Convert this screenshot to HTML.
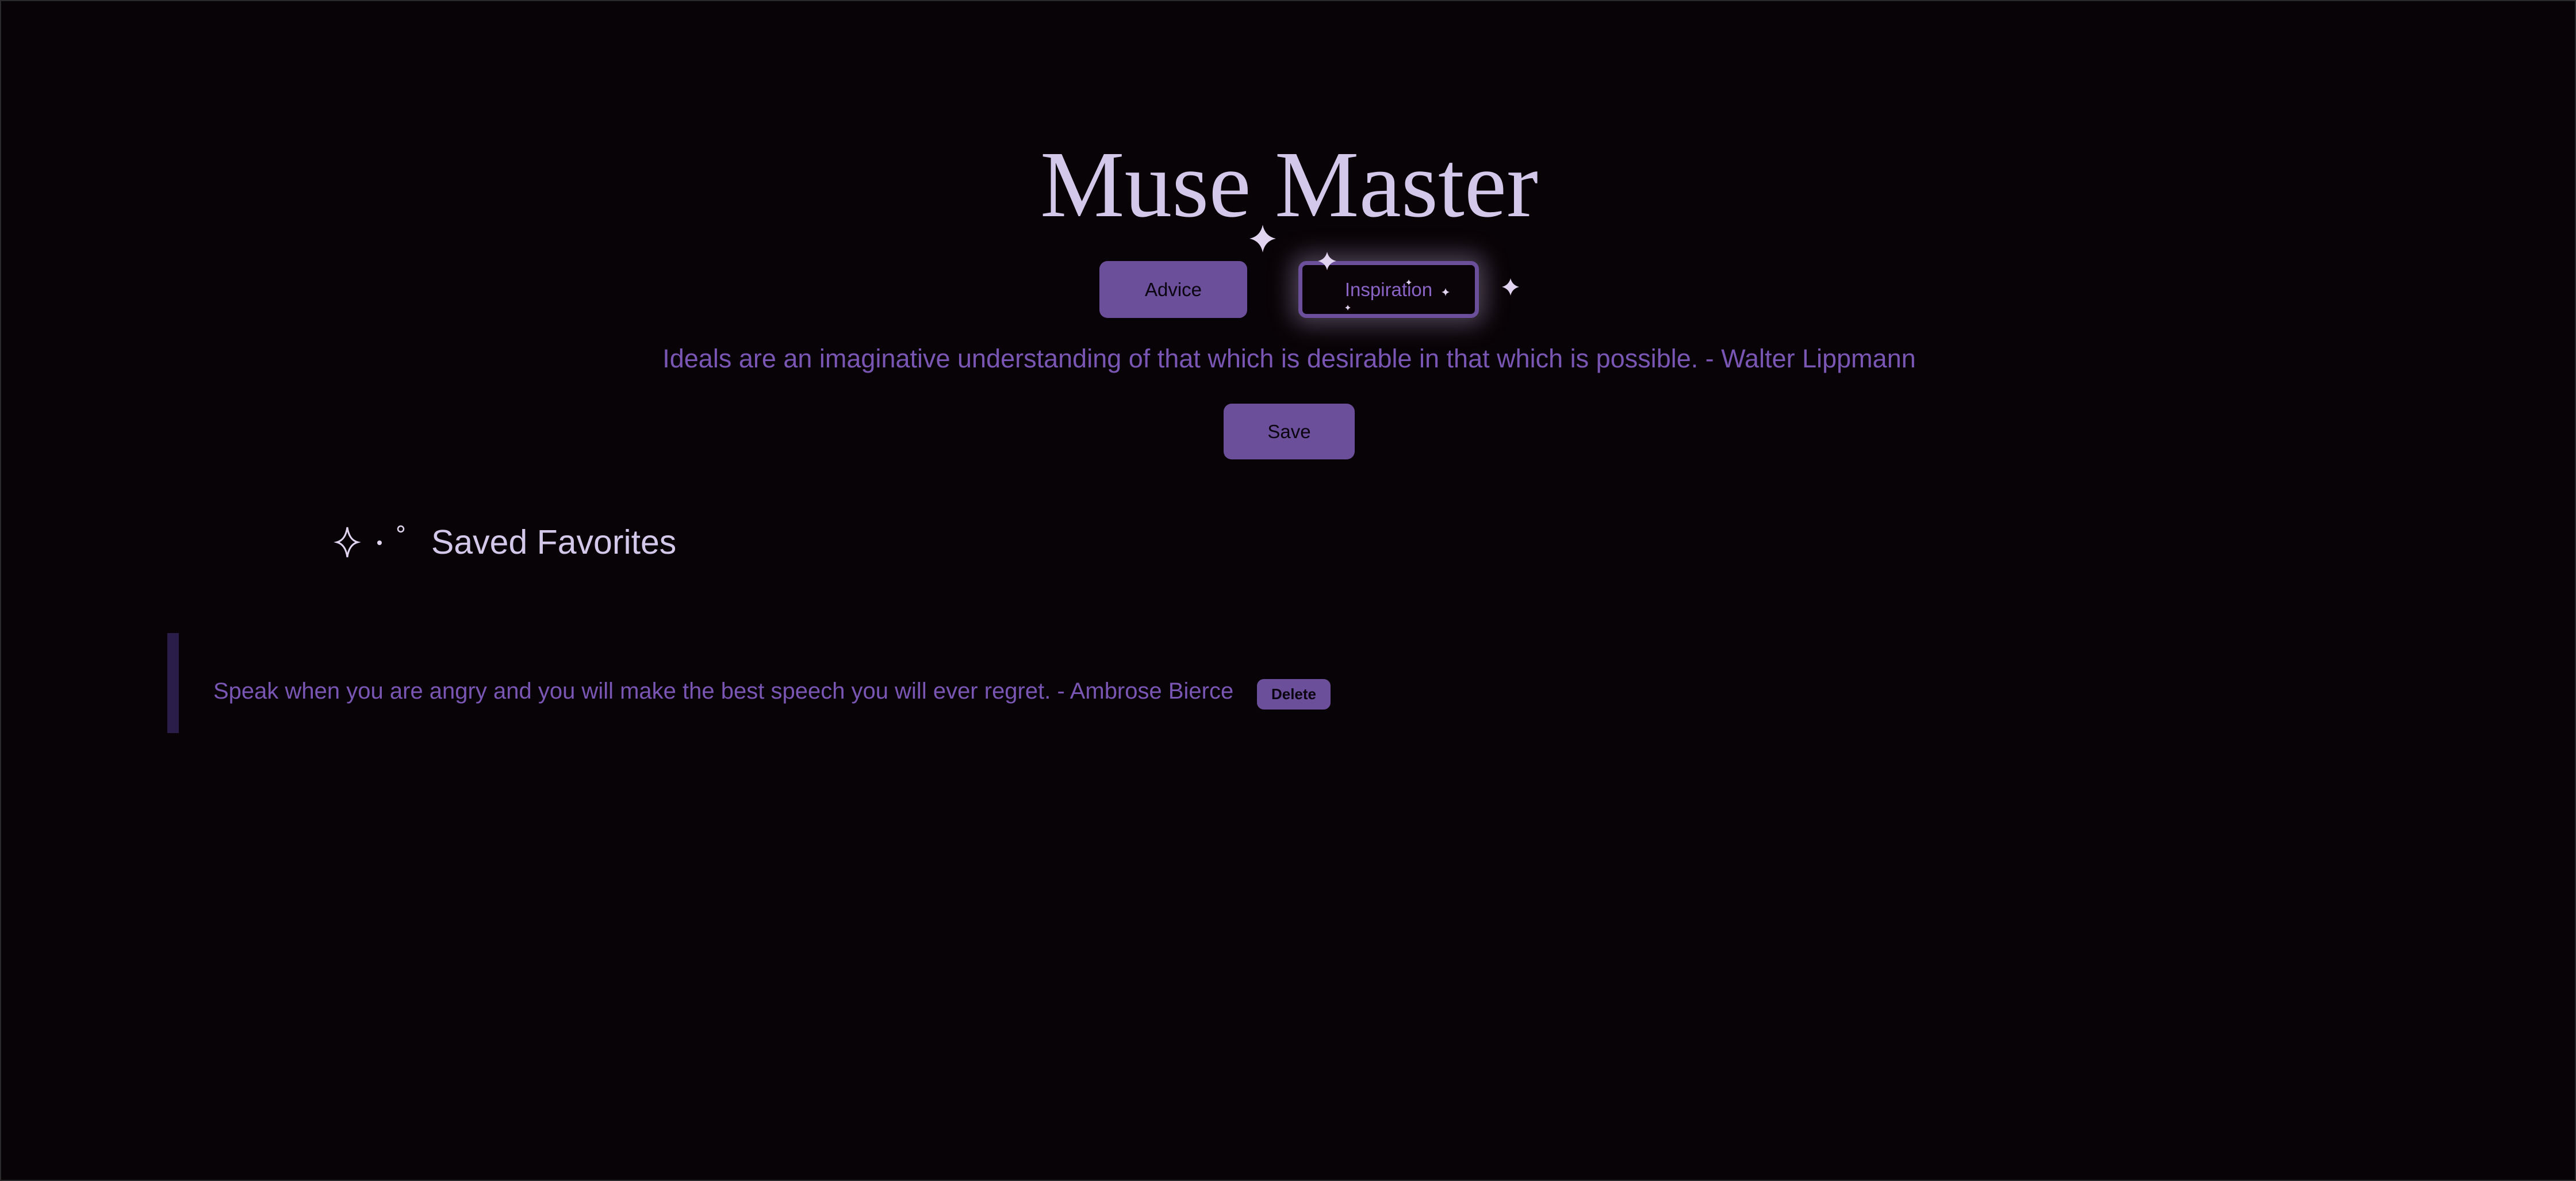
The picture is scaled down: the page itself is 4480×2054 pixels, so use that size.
<!DOCTYPE html>
<html><head><meta charset="utf-8"><style>
html,body{margin:0;padding:0}
body{width:4480px;height:2054px;background:#080306;position:relative;overflow:hidden;font-family:"Liberation Sans",sans-serif;box-sizing:border-box;border:2px solid #2a2a2a}
.a{position:absolute}
.title{left:0;width:4480px;text-align:center;top:236px;font-family:"Liberation Serif",serif;font-size:165px;color:#d4c8ea;line-height:1}
.btn{border-radius:14px;background:#6b4f9a;color:#0a0510;font-size:33px;display:flex;align-items:center;justify-content:center}
.insp{background:#0a0408;border:7px solid #6b4f9a;box-sizing:border-box;color:#8a64c4;box-shadow:0 0 40px 12px rgba(200,180,230,.35)}
.quote{left:0;width:4480px;text-align:center;top:596px;font-size:45px;color:#7a56b4}
.star{fill:#e0d4f0}
</style></head><body>
<div class="a title">Muse Master</div>
<div class="a btn" style="left:1910px;top:452px;width:257px;height:99px">Advice</div>
<div class="a btn insp" style="left:2256px;top:452px;width:314px;height:99px">Inspiration</div>
<svg class="a" style="left:0;top:0" width="4480" height="700">
<path class="star" d="M2194 389 Q2198 409 2217 413 Q2198 417 2194 437 Q2190 417 2171 413 Q2190 409 2194 389Z"/>
<path class="star" d="M2306 436 Q2309 449 2322 452 Q2309 455 2306 468 Q2303 455 2290 452 Q2303 449 2306 436Z"/>
<path class="star" d="M2625 482 Q2628 494 2640 497 Q2628 500 2625 512 Q2622 500 2610 497 Q2622 494 2625 482Z"/>
<path class="star" d="M2512 499 Q2513 505 2519 506 Q2513 507 2512 513 Q2511 507 2505 506 Q2511 505 2512 499Z"/>
<path class="star" d="M2448 484 Q2449 488 2453 489 Q2449 490 2448 494 Q2447 490 2443 489 Q2447 488 2448 484Z"/>
<path class="star" d="M2342 528 Q2343 532 2347 533 Q2343 534 2342 538 Q2341 534 2337 533 Q2341 532 2342 528Z"/>
</svg>
<div class="a quote">Ideals are an imaginative understanding of that which is desirable in that which is possible. - Walter Lippmann</div>
<div class="a btn" style="left:2126px;top:700px;width:228px;height:97px">Save</div>
<svg class="a" style="left:570px;top:905px" width="180" height="70">
<path d="M32 10 Q35 32 50 36 Q35 40 32 62 Q29 40 14 36 Q29 32 32 10Z" fill="none" stroke="#e0d4f0" stroke-width="3"/>
<circle cx="88" cy="37" r="4" fill="#e0d4f0"/>
<circle cx="125" cy="13" r="5" fill="none" stroke="#e0d4f0" stroke-width="2.5"/>
</svg>
<div class="a" style="left:748px;top:906px;font-size:59px;color:#d4c8ea;line-height:70px">Saved Favorites</div>
<div class="a" style="left:289px;top:1099px;width:20px;height:174px;background:#2a1d4a"></div>
<div class="a" style="left:369px;top:1176px;font-size:40px;color:#7a56b4;line-height:48px;white-space:nowrap">Speak when you are angry and you will make the best speech you will ever regret. - Ambrose Bierce</div>
<div class="a btn" style="left:2184px;top:1179px;width:128px;height:53px;font-size:26px;border-radius:12px;font-weight:bold">Delete</div>
</body></html>
